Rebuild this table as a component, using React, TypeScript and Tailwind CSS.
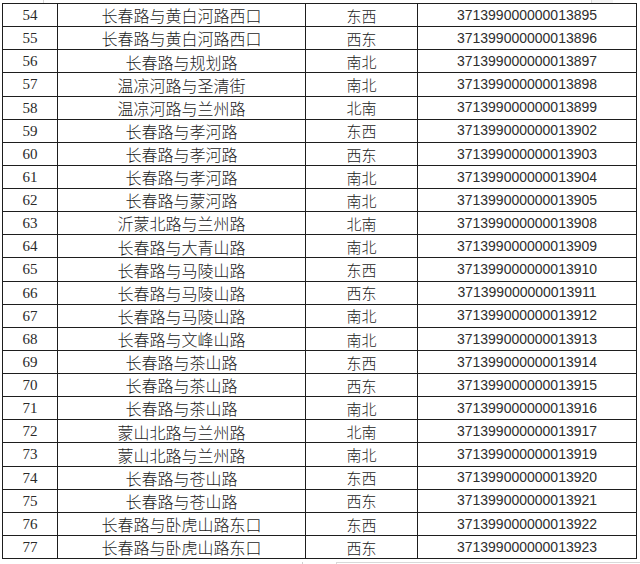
import React from 'react';

const rows: [number, string, string, string][] = [
  [54, '长春路与黄白河路西口', '东西', '13895'],
  [55, '长春路与黄白河路西口', '西东', '13896'],
  [56, '长春路与规划路', '南北', '13897'],
  [57, '温凉河路与圣清街', '南北', '13898'],
  [58, '温凉河路与兰州路', '北南', '13899'],
  [59, '长春路与孝河路', '东西', '13902'],
  [60, '长春路与孝河路', '西东', '13903'],
  [61, '长春路与孝河路', '南北', '13904'],
  [62, '长春路与蒙河路', '南北', '13905'],
  [63, '沂蒙北路与兰州路', '北南', '13908'],
  [64, '长春路与大青山路', '南北', '13909'],
  [65, '长春路与马陵山路', '东西', '13910'],
  [66, '长春路与马陵山路', '西东', '13911'],
  [67, '长春路与马陵山路', '南北', '13912'],
  [68, '长春路与文峰山路', '南北', '13913'],
  [69, '长春路与茶山路', '东西', '13914'],
  [70, '长春路与茶山路', '西东', '13915'],
  [71, '长春路与茶山路', '南北', '13916'],
  [72, '蒙山北路与兰州路', '北南', '13917'],
  [73, '蒙山北路与兰州路', '南北', '13919'],
  [74, '长春路与苍山路', '东西', '13920'],
  [75, '长春路与苍山路', '西东', '13921'],
  [76, '长春路与卧虎山路东口', '东西', '13922'],
  [77, '长春路与卧虎山路东口', '西东', '13923'],
];

const cjk = "font-['Noto_Sans_CJK_SC','Noto_Sans_CJK_JP',sans-serif] font-light";

export default function App() {
  return (
    <div className="w-[640px] h-[564px] bg-white overflow-hidden text-[#1c1c1c]">
      {/* faint cell edges above the table */}
      <div className="h-[3px] flex">
        <div className="ml-[43px] w-[1px] bg-[#d6d6d6]" />
        <div className="ml-[547px] w-[22px] border-l border-[#d6d6d6] bg-[#f4f4f4]" />
      </div>

      <div className="ml-[2px] w-[635px] border-t border-x border-[#1e1e1e]">
        {rows.map(([no, road, dir, code]) => (
          <div
            key={no}
            className="grid grid-cols-[55px_248px_112px_218px] h-[23.125px] border-b border-[#1e1e1e]"
          >
            <div className="flex items-center justify-center border-r border-[#1e1e1e] font-['Liberation_Serif',serif] text-[15px] text-[#2a2a2a]">
              {no}
            </div>
            <div className={`flex items-center justify-center border-r border-[#1e1e1e] ${cjk} text-[16px] leading-none`}>
              {road}
            </div>
            <div className={`flex items-center justify-center border-r border-[#1e1e1e] ${cjk} text-[15px] leading-none`}>
              {dir}
            </div>
            <div className="flex items-center justify-center font-['Liberation_Sans',Arial,sans-serif] text-[14px] text-[#2e2e2e]">
              {'3713990000000' + code}
            </div>
          </div>
        ))}
      </div>

      {/* faint cell edges below the table */}
      <div className="h-[6px] flex">
        <div className="ml-[302px] mt-[3px] w-[1px] bg-[#cfcfcf]" />
        <div className="ml-[33px] mt-[3px] flex-1 border-l border-t border-[#d9d9d9]" />
      </div>
    </div>
  );
}
